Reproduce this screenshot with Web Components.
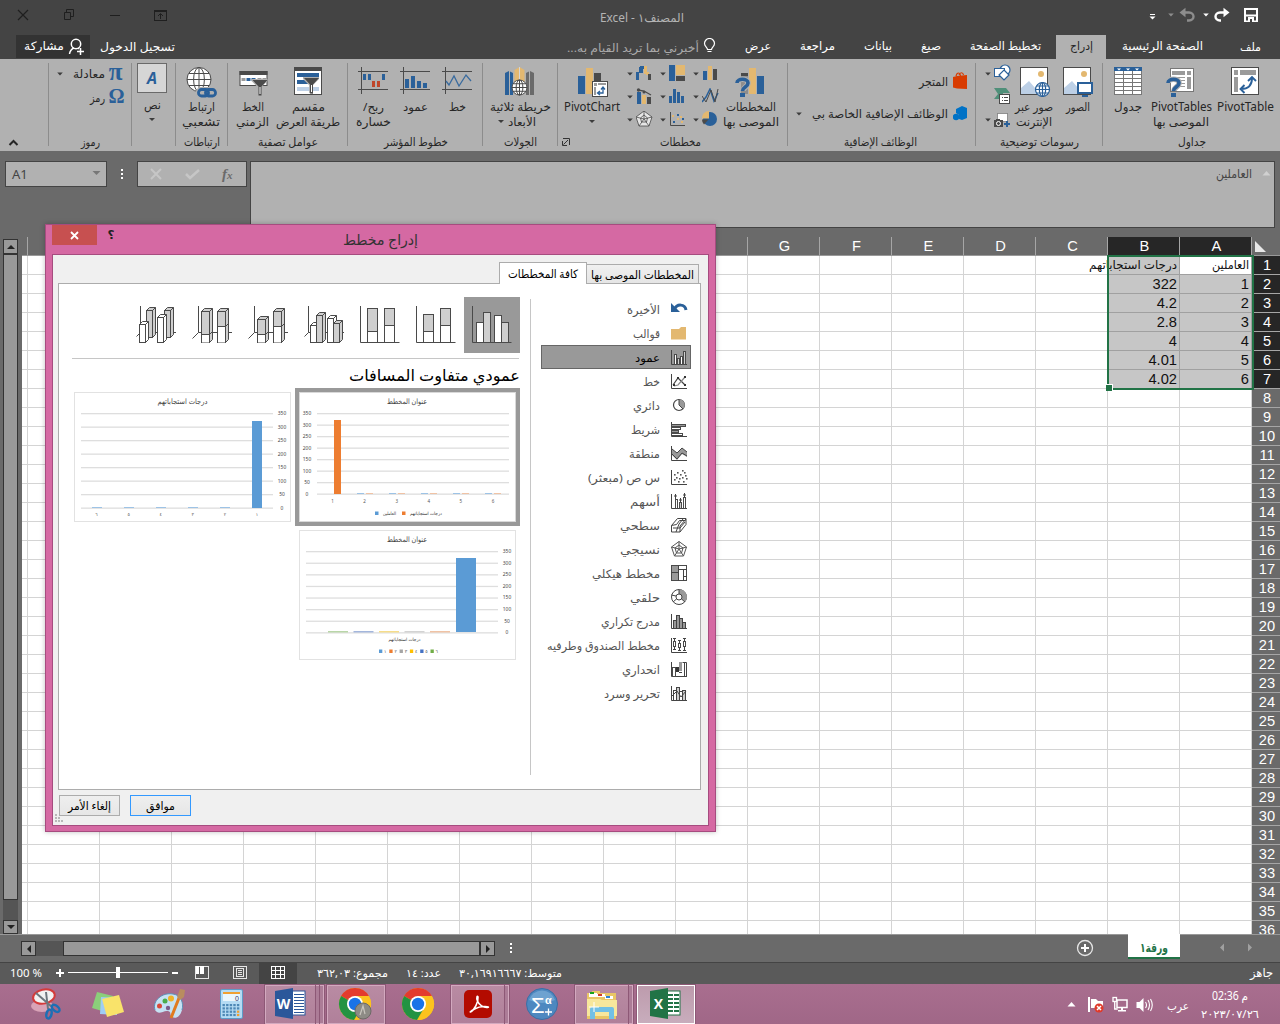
<!DOCTYPE html>
<html lang="ar">
<head>
<meta charset="utf-8">
<title>المصنف١ - Excel</title>
<style>
html,body{margin:0;padding:0}
body{width:1280px;height:1024px;overflow:hidden;background:#6a6a6a;font-family:"Noto Sans","DejaVu Sans",sans-serif}
</style>
</head>
<body>
<excel-app></excel-app>
<script>
const BLUE='#2a6099', SAND='#e3b870', DARK='#4a4a4a';

/* ---------- small markup helpers ---------- */
const svg=(x,y,w,h,c)=>`<svg width="${w}" height="${h}" viewBox="${x} ${y} ${w} ${h}" style="display:block;flex:none">${c}</svg>`;
const ic=(x,y,w,h,c)=>[x,y,w,svg(x,y,w,h,c)];
const rc=(x,y,w,h,f,s='')=>`<rect x="${x}" y="${y}" width="${w}" height="${h}" fill="${f}" ${s}/>`;
const bx=(x,y,w,h,f,s=DARK)=>`<rect x="${x+.5}" y="${y+.5}" width="${w-1}" height="${h-1}" fill="${f}" stroke="${s}"/>`;
const pa=(d,s=DARK,w=1,f='none')=>`<path d="${d}" stroke="${s}" stroke-width="${w}" fill="${f}"/>`;
const fl=(d,f)=>`<path d="${d}" fill="${f}" fill-rule="evenodd"/>`;
const ci=(x,y,r,f,s='none',w=1)=>`<circle cx="${x}" cy="${y}" r="${r}" fill="${f}" stroke="${s}" stroke-width="${w}"/>`;
const fit=(w,t,size=11.5,color='#262626',more='')=>`<fit-text w="${w}" style="font-size:${size}px;color:${color};${more}">${t}</fit-text>`;
const tx=(x1,x2,yc,t,size,color,more)=>[x1,yc-8,x2-x1,fit(x2-x1,t,size,color,more)];
const ar=(x,y,c='#3c3c3c')=>ic(x-3,y-2,6,4,fl(`M${x-2.8} ${y-1.5}h5.6l-2.8 3z`,c));
/* a horizontal flex strip: items are [x, y, width, html] */
const strip=(x0,y0,items)=>{
  let c=x0, out='';
  for(const [x,y,w,h] of items.slice().sort((a,b)=>a[0]-b[0])){
    out+=`<div style="flex:none;width:${w}px;margin-left:${x-c}px;margin-top:${y-y0}px">${h}</div>`;
    c=x+w;
  }
  return `<div style="display:flex;align-items:flex-start">${out}</div>`;
};

function define(name,css,html){
  const t=document.createElement('template');
  t.innerHTML=`<style>:host{display:block;box-sizing:border-box}*{box-sizing:border-box}${css}</style>${html}`;
  customElements.define(name,class extends HTMLElement{
    constructor(){super();this.attachShadow({mode:'open'}).append(t.content.cloneNode(true));}
  });
}
</script>
<script>
/* ---------- title bar ---------- */
define('title-bar',`:host{height:35px;background:#444;overflow:hidden}`,strip(0,0,[
  ic(17,9,13,12,pa('M18 10l10 10M28 10l-10 10','#1f1f1f',1.2)),
  ic(63,9,12,12,pa('M66.5 12.5v-3h7v7h-3M64.5 12.5h6v7h-6z','#1f1f1f')),
  ic(109,14,12,3,rc(110,15,10,1,'#1f1f1f')),
  ic(153,9,15,12,bx(154,10,13,11,'none','#1f1f1f')+rc(154,10,13,2,'#1f1f1f')+pa('M160.5 19v-5M158 16l2.5-2.5 2.5 2.5','#1f1f1f')),
  tx(600,684,18,'المصنف١ - Excel',12,'#b4b4b4'),
  ic(1149,13,7,8,rc(1150,14,5,1,'#fff')+fl('M1149.5 16.5h6l-3 3z','#fff')),
  ar(1170.5,15,'#8d8d8d'),
  ic(1179,7,17,16,pa('M1184 12.5h5c6 0 6 8 0 8h-2','#8d8d8d',2.4)+fl('M1179.5 12.5l6-4.8v9.6z','#8d8d8d')),
  ar(1205.5,15,'#fff'),
  ic(1214,7,16,16,pa('M1225 12.5h-5c-6 0-6 8 0 8h1','#fff',2.4)+fl('M1229.5 12.5l-6-4.8v9.6z','#fff')),
  ic(1244,8,15,14,fl('M1244 8h14v14h-14zM1246 10v4.5h10V10z','#fff')+rc(1246,16.5,10,4,'#444')+rc(1248,17,6,5,'#fff')+rc(1250,19,2,3,'#444'))
]));
</script>
<script>
/* ---------- ribbon tabs ---------- */
define('ribbon-tabs',`:host{height:24px;background:#444}
 .share{background:#333;height:23px;overflow:hidden}.on{background:#b1b1b1;height:24px;overflow:hidden}`,strip(0,35,[
  [16,35,74,'<div class="share">'+strip(16,35,[tx(24,64,46,'مشاركة',11.5,'#fff'),
    ic(68,38,17,17,ci(76,44,4.7,'none','#fff',1.5)+pa('M69.5 54c.5-3 2-5 4.5-6M79 49l-1-1','#fff',1.5)+pa('M77 51.5h7M80.5 48v7','#fff',1.5))])+'</div>'],
  tx(100,175,47,'تسجيل الدخول',11.5,'#fff'),
  tx(567,699,48,'أخبرني بما تريد القيام به...',11.5,'#a9a9a9'),
  ic(703,38,13,17,pa('M707.5 49.5c0-2-3-3-3-6a5 5 0 0 1 10 0c0 3-3 4-3 6z','#fff',1.2)+rc(707.5,51,4,1,'#fff')),
  tx(745,771,46,'عرض',11.5,'#fff'),tx(800,835,46,'مراجعة',11.5,'#fff'),
  tx(864,892,46,'بيانات',11.5,'#fff'),tx(921,941,46,'صيغ',11.5,'#fff'),
  tx(970,1041,46,'تخطيط الصفحة',11.5,'#fff'),
  [1056,35,50,'<div class="on">'+strip(1056,35,[tx(1070,1093,46,'إدراج',11.5)])+'</div>'],
  tx(1122,1203,46,'الصفحة الرئيسية',11.5,'#fff'),tx(1240,1261,47,'ملف',11.5,'#fff')
]));
</script>
<script>
/* ---------- ribbon ---------- */
define('ribbon-group',`:host{display:flex;flex-direction:column;flex:none;height:92px;background:linear-gradient(#8c8c8c,#8c8c8c) right 4px/1px 83px no-repeat}
 :host([last]){background:none}
 .c{height:75px;overflow:hidden}.l{height:16px;display:flex;justify-content:center}`,
 `<div class="c"><slot></slot></div><div class="l"><slot name="label"></slot></div>`);
/* big button: icon drawn in a 34px box, caption lines under it */
const big=(x,w,icon,labels)=>[x,65,w,`<div style="display:flex;flex-direction:column;align-items:center">${svg(x+w/2-17,65,34,34,icon)}${labels.map(l=>`<div style="height:15px;display:flex;align-items:center">${l}</div>`).join('')}</div>`];
const group=(x,x2,label,lw,body,cx,more='')=>`<ribbon-group style="width:${x2-x}px" ${more}>${body}<div slot="label" style="margin-left:${cx?2*cx-x-x2:0}px">${label?fit(lw,label,11.5):''}</div></ribbon-group>`;
const funnel=(x,y)=>fl(`M${x} ${y}h16v2l-6 6v9l-4-1v-8l-6-6z`,'#b1b1b1')+fl(`M${x+1} ${y+1}h15l-6 6.5v9h-3v-9z`,DARK)+rc(x+8,y+8,1,7,'#fff');
const quest=(x,y)=>pa(`M${x+2} ${y+5}c0-5 11-5 11 0c0 4-5 4-5 8`,'#b1b1b1',5.5)+pa(`M${x+2} ${y+5}c0-5 11-5 11 0c0 4-5.5 4-5.5 8`,BLUE,3.6)+rc(x+5,y+15,5,4,BLUE);
const down='<svg width="6" height="3" viewBox="0 0 6 3" style="display:block"><path d="M0 0h6l-3 3z" fill="#3c3c3c"/></svg>';
const globe=(x,y,r,c=DARK,w=1)=>ci(x,y,r,'#fff',c,w)+`<ellipse cx="${x}" cy="${y}" rx="${r*.45}" ry="${r}" fill="none" stroke="${c}" stroke-width="${w}"/>`+pa(`M${x-r} ${y}h${2*r}M${x} ${y-r}v${2*r}M${x-r*.85} ${y-r*.5}h${r*1.7}M${x-r*.85} ${y+r*.5}h${r*1.7}`,c,w);
const photo=(x,y)=>bx(x,y,28,28,'#fff')+ci(x+21,y+7,3,SAND)+fl(`M${x+1} ${y+27}v-6l8-7 7 8 3-3v8z`,'#bdd0e6');
const spark=(x,c)=>pa(`M${x} 71.5h30M${x} 89.5h30M${x+3.5} 67v27`)+c;
const link=`fill="none" stroke="${BLUE}" stroke-width="2.8"`;
</script>
<script>
const gSymbols=group(48,132,'رموز',19,strip(48,59,[
  [56,65,70,
    strip(56,65,[ar(59.5,73.5),tx(73,105,74,'معادلة'),[108,64,15,`<div style="font:bold 25px/16px 'Liberation Serif';color:${BLUE};height:19px;text-align:center">π</div>`]])+
    strip(56,83,[tx(90,105,98,'رمز'),[108,87,17,`<div style="font:bold 20px/18px 'Liberation Serif';color:${BLUE};height:19px;text-align:center">Ω</div>`]])
  ]
]));
const gText=group(132,176,'',0,strip(132,59,[
  [137,63,30,`<div style="display:flex;flex-direction:column;align-items:center"><div style="width:30px;height:30px;border:1px solid #6a6a6a;background:#d6d6d6;font:italic bold 16px/28px 'Open Sans','Liberation Sans';color:${BLUE};text-align:center">A</div><div style="margin-top:4px;height:16px">${fit(17,'نص')}</div><div style="margin-top:5px">${down}</div></div>`]
]));
const gLinks=group(176,228,'ارتباطات',36,strip(176,59,[
  big(181,40,globe(199,79.5,12)+`<rect x="196" y="87" width="22" height="11" rx="5" fill="#b1b1b1"/><rect x="198.5" y="89.5" width="10" height="6.5" rx="3" ${link}/><rect x="205.500" y="89.5" width="10" height="6.5" rx="3" ${link}/>`,[fit(27,'ارتباط'),fit(38,'تشعبي')])
]));
const gFilters=group(228,348,'عوامل تصفية',60,strip(228,59,[
  big(234,37,bx(239,71,28,15,'#fff')+rc(239,71,28,4,DARK)+rc(241,78,4,3,'#9a9a9a')+rc(246,78,4,3,BLUE)+rc(251,78,4,3,BLUE)+rc(257,78,4,3,'#9a9a9a')+rc(262,78,4,3,'#9a9a9a')+funnel(251,79),[fit(22,'الخط'),fit(33,'الزمني')]),
  big(275,66,bx(294,67,28,28,'#fff')+rc(294,67,28,4,DARK)+rc(297,73,22,4,BLUE)+rc(297,80,12,4,BLUE)+rc(297,87,22,4,'#bdd0e6')+funnel(303,77),[fit(33,'مقسم'),fit(64,'طريقة العرض')])
]));
</script>
<script>
const gSpark=group(348,483,'خطوط المؤشر',64,strip(348,59,[
  big(354,38,spark(358,rc(363,74,3,6,BLUE)+rc(368,74,3,6,BLUE)+rc(372,81,3,6,'#c0472b')+rc(377,81,3,6,'#c0472b')+rc(382,74,3,6,BLUE)),[fit(21,'ربح/'),fit(35,'خسارة')]),
  big(398,34,spark(400,rc(405,79,4,9,BLUE)+rc(411,76,4,12,BLUE)+rc(417,81,4,7,BLUE)+rc(423,83,4,5,BLUE)),[fit(25,'عمود')]),
  big(440,34,spark(442,pa('M446 81l3 4 5-9 5 10 7-11 5 6','#3a6b9e',1.3)),[fit(17,'خط')])
]));
const gTours=group(483,558,'الجولات',33,strip(483,59,[
  big(487,66,
    fl('M505 73l4-2 4 2v22h-8z',BLUE)+pa('M509.5 71v24','#b1b1b1')+fl('M514.5 70l5-3 5 3v20h-10z',SAND)+pa('M519.5 67v20','#d6d6d6')+fl('M526 73l4-2 4 2v22h-8z','#6a6a6a')+pa('M529.5 71v24','#b1b1b1')+globe(519.5,87.5,7.5),
    [fit(61,'خريطة ثلاثية'),`<div style="display:flex;align-items:center;gap:4px">${down}${fit(28,'الأبعاد')}<span style="width:3px"></span></div>`])
]));
</script>
<script>
const pivotChart=rc(578,76,7,18,BLUE)+rc(586,68,7,26,SAND)+rc(594,73,7,8,DARK)+bx(592,81,16,16,'#fff')+rc(594,83,3,3,'#9a9a9a')+rc(598,83,8,2,'#9a9a9a')+rc(594,87,2,8,'#9a9a9a')+pa('M598 93h5v-5M600 91l-2.5 2 2.5 2M601 89.5l2-2.5 2 2.5',BLUE,1.3);
const smallCharts=
  strip(626,62,[
    ar(629.5,73.5),ic(636,65,17,16,rc(636,72,3,8,BLUE)+rc(639,67,4,6,BLUE)+rc(640,66,4,3,BLUE)+rc(644,66,3,8,SAND)+rc(646,72,3,3,SAND)+rc(648,74,3,6,DARK)),
    ar(662.5,73.5),ic(669,65,17,16,rc(669,65,6,16,BLUE)+rc(676,65,9,10,SAND)+rc(676,76,9,5,DARK)),
    ar(695.5,73.5),ic(702,65,17,16,rc(703,71,4,9,BLUE)+rc(708,66,4,14,SAND)+rc(713,69,4,11,DARK))])+
  strip(626,81,[
    ar(629.5,96.5),ic(636,88,17,17,rc(637,92,4,12,BLUE)+rc(642,95,4,9,SAND)+rc(647,97,4,7,DARK)+pa('M638 90l6 1 7 4',DARK,1.3)+ci(638.5,90,1.7,DARK)+ci(644,92,1.5,DARK)),
    ar(662.5,96.5),ic(669,88,17,17,rc(669,96,3,7,BLUE)+rc(673,89,3,14,BLUE)+rc(677,92,3,11,BLUE)+rc(681,96,3,7,BLUE)),
    ar(695.5,96.5),ic(702,88,17,17,pa('M702 102l4-5 4-8 4 12 4-8',BLUE,1.5)+pa('M702 96l4 6 5-12 4 12 3-13',DARK,1))])+
  strip(626,105,[
    ar(629.5,119.5),ic(636,111,17,17,fl('M644 111l8 6-3 9h-10l-3-9z','#e6e6e6')+pa('M644 111l8 6-3 9h-10l-3-9zM644 115l3.5 3-1 4h-5l-1-4zM644 111v8l8-2M644 119l5 7M644 119l-5 7M644 119l-8-2',DARK,.8)),
    ar(662.5,119.5),ic(669,111,17,17,pa('M670.5 112v13.5H685')+rc(672,115,2,2,SAND)+rc(677,114,2,2,BLUE)+rc(682,118,2,2,BLUE)+rc(680,116,2,2,SAND)+rc(673,121,2,2,BLUE)+rc(677,118,2,2,SAND)+rc(681,121,2,2,SAND)),
    ar(695.5,119.5),ic(702,111,17,17,ci(710,119,7,BLUE)+fl('M709 118.500v-7.500a7 7 0 0 0-7 7.500z',SAND)+fl('M708.5 119.5h-6.5a7 7 0 0 0 2 5z',DARK))]);
const launcher='<svg width="8" height="8" viewBox="0 0 8 8" style="display:block"><path d="M1 .5H7.500V7M.5 3v4.500H5M6 2L1.500 6.500" stroke="#333" fill="none"/></svg>';
const gCharts=group(558,788,'مخططات',41,strip(558,59,[
  [562,65,60,`<div style="display:flex;flex-direction:column;align-items:center">${svg(575,65,34,34,pivotChart)}<div style="height:15px">${fit(56,'PivotChart',12)}</div><div style="margin-top:6px">${down}</div></div>`],
  [626,62,94,smallCharts],
  big(722,58,rc(757,76,7,18,BLUE)+rc(749,68,7,26,SAND)+rc(741,73,7,21,'#8d8d8d')+rc(741,73,7,3,DARK)+quest(735,78),[fit(50,'المخططات'),fit(56,'الموصى بها')])
]),680.5);
</script>
<script>
const gAddins=group(788,976,'الوظائف الإضافية',73,strip(788,59,[
  [795,71,174,
    strip(795,71,[tx(919,948,82,'المتجر'),ic(953,71,15,18,fl('M953 77l4-1 10-1v14l-10-.5-4-1z','#d83b01')+pa('M956 76c1-4 4-4 4.5 0M959 75c1-3 4-3 4.5 0','#d83b01',1.2))])+
    strip(795,89,[ar(798.5,113),tx(812,948,113,'الوظائف الإضافية الخاصة بي'),ic(953,105,15,15,fl('M956 108l6-3 5 2v10l-5 2-3-1v-4l-3-2z','#0072c6')+ci(956,116,3.2,'#0072c6'))])
  ]
]),880.5);
const gArt=group(976,1103,'رسومات توضيحية',79,strip(976,59,[
  [984,63,27,
    strip(984,63,[ar(987.5,73.5),ic(994,64,17,17,ci(1005,70,5,'#fff',BLUE,1.2)+bx(994,68,11,9,'#fff',BLUE)+pa('M1004 70l5 5-5 5-5-5z',BLUE,1.2,'#fff'))])+
    strip(984,81,[ic(994,88,17,17,fl('M994 88h12l4 5h-7v6h-9l4-5z','#4f8f79')+bx(999,94,11,10,'#fff')+rc(1002,97,1,1,DARK)+rc(1004,97,4,1,DARK)+rc(1002,100,1,1,DARK)+rc(1004,100,4,1,DARK))])+
    strip(984,105,[ar(987.5,119.5),ic(994,112,17,16,`<rect x="997.5" y="113.5" width="10" height="8" fill="#fff" stroke="${DARK}" stroke-dasharray="1 1"/>`+rc(994,120,9,7,DARK)+rc(996,119,4,2,DARK)+ci(998.5,123.5,2,'none','#fff')+pa('M1004 124h6M1007 121v6',BLUE,2))])
  ],
  big(1014,40,photo(1020,67)+globe(1042.5,89.5,7,BLUE,1.2),[fit(38,'صور عبر'),fit(36,'الإنترنت')]),
  big(1061,34,photo(1063,67)+`<rect x="1078" y="83" width="14" height="10" fill="#fff" stroke="${BLUE}" stroke-width="2"/>`+rc(1082,95,6,2,BLUE),[fit(24,'الصور')])
]));
const tableIcon=bx(1114,67,28,28,'#fff','#777')+rc(1114,67,28,4,BLUE)+[74,78,82,86,90].map(y=>rc(1114,y,28,1,'#777')).join('')+rc(1123,71,1,24,'#777')+rc(1132,71,1,24,'#777')+[1118,1127,1136].map(x=>fl(`M${x-1} 68.5h4l-2 2z`,'#fff')).join('');
const gTables=group(1103,1280,'جداول',28,strip(1103,59,[
  big(1112,32,tableIcon,[fit(28,'جدول')]),
  big(1150,62,bx(1170,68,24,24,'#fff','#777')+rc(1172,71,13,4,'#9a9a9a')+rc(1187,71,4,4,'#9a9a9a')+rc(1187,77,4,12,'#9a9a9a')+rc(1174,77,11,1,'#9a9a9a')+rc(1178,80,7,1,'#9a9a9a')+rc(1178,83,7,1,'#9a9a9a')+rc(1178,86,7,1,'#9a9a9a')+quest(1166,78),[fit(61,'PivotTables',12),fit(56,'الموصى بها')]),
  big(1216,58,bx(1231,67,28,28,'#fff')+rc(1234,70,4,5,'#9a9a9a')+rc(1240,70,16,5,'#9a9a9a')+rc(1234,77,4,15,'#9a9a9a')+pa('M1241 89c7 0 11-4 11-11M1244.5 85l-4 4 4 4M1248 81l4-4 4 4',BLUE,1.9),[fit(57,'PivotTable',12)])
]),0,'last');
define('ribbon-bar',`:host{display:flex;height:92px;background:#b1b1b1}
 .e{width:49px;flex:none;background:linear-gradient(#8c8c8c,#8c8c8c) right 4px/1px 83px no-repeat}ribbon-group:nth-of-type(1){margin-left:-1px}
 .la{position:absolute;left:562px;top:138px}`,
 '<div class="e">'+strip(0,59,[ic(8,137,11,9,pa('M9.5 145l4-4 4 4','#262626',2))])+'</div>'+gSymbols+gText+gLinks+gFilters+gSpark+gTours+gCharts+gAddins+gArt+gTables+'<div class="la">'+launcher+'</div>');
</script>
<script>
/* ---------- formula bar ---------- */
define('formula-bar',`:host{height:86px;background:#6a6a6a;padding-top:10px}
 .b{border:1px solid #444;background:#b1b1b1;height:26px;overflow:hidden}.f{height:67px}`,strip(0,161,[
  [5,161,102,'<div class="b">'+strip(6,162,[[12,166,20,`<div style="font:13px/16px 'Noto Sans';color:#444">A1</div>`],ic(92,170,9,5,fl('M92.5 171h8l-4 4z','#777'))])+'</div>'],
  ic(120,167,4,14,rc(121,169,2,2,'#fff')+rc(121,173,2,2,'#fff')+rc(121,177,2,2,'#fff')),
  [137,161,110,'<div class="b">'+strip(138,162,[ic(150,168,12,12,pa('M151 169l10 10M161 169l-10 10','#c6c6c6',2)),ic(185,168,15,12,pa('M186 174l4 4 9-8','#c6c6c6',2.5)),[222,165,18,`<div style="font:italic bold 15px/18px 'Liberation Serif';color:#6a6a6a">f<span style="font-size:11px">x</span></div>`]])+'</div>'],
  [250,161,1025,'<div class="b f">'+strip(251,162,[tx(1216,1252,174,'العاملين',12,'#444'),ic(1262,170,9,6,fl('M1262.5 175.5h8l-4-4.5z','#d0d0d0'))])+'</div>']
]));
</script>
<script>
/* ---------- worksheet ---------- */
const cells={1:['العاملين','درجات استجاباتهم'],2:['1','322'],3:['2','4.2'],4:['3','2.8'],5:['4','4'],6:['5','4.01'],7:['6','4.02']};
let rows='';
for(let r=1;r<=36;r++){
  let h='<i class="c" style="width:6px"></i>';
  for(let k=16;k>=0;k--){
    const s=r<8&&k<2, v=s?cells[r][k]:'';
    const t=r===1&&s?fit(k?88:37,v,12,'#111','margin-top:1px;'):v;
    const cls=(s?(r===1&&k===0?' act':' s'):'')+(r===1&&k===1?' over':'');
    h+='<div class="c'+cls+'">'+t+'</div>';
  }
  rows+='<div class="r">'+h+'<div class="n'+(r<8?' h':'')+'">'+r+'</div></div>';
}
let heads='<b style="width:6px"></b>';
for(let k=16;k>=0;k--)heads+='<b class="'+(k<2?'h':'')+'">'+(k<7?'ABCDEFG'[k]:'')+'</b>';
define('sheet-grid',`:host{display:flex;height:697px;background:#6a6a6a;overflow:hidden}
 .v{width:22px;flex:none;padding:2px 0 0 3px}.v div{width:15px;border:1px solid #333;background:#999;height:15px;display:flex;align-items:center;justify-content:center}
 .v .th{height:646px}.v .tr{height:20px;border-width:0;background:#555}
 .g{width:1258px;position:relative}
 .hd{display:flex;height:19px;border-bottom:1px solid #999}
 .hd b{width:72px;flex:none;border-right:1px solid #a6a6a6;font:14.67px/19px "Liberation Sans";color:#fff;text-align:center;height:18px;padding-left:2px}
 .hd b.h{background:#262626}
 .r{display:flex;height:19px}.c{width:72px;flex:none;height:19px;background:#fff;border-right:1px solid #d4d4d4;border-bottom:1px solid #d4d4d4;font:14.67px/19px "Liberation Sans";color:#111;padding-right:2px;display:flex;justify-content:flex-end}
 .s{background:#c6c6c6;border-color:#a0a0a0}.act{border-color:#a0a0a0}.over{position:relative;z-index:1}
 .n{width:28px;flex:none;border-bottom:1px solid #a6a6a6;font:14.67px/19px "Liberation Sans";color:#fff;text-align:center;padding-left:2px}
 .n.h{background:#262626}
 .sel{position:absolute;left:1085px;top:18px;width:147px;height:135px;border:2px solid #217346;z-index:2}
 .sel::after{content:"";position:absolute;left:-3px;bottom:-3px;width:6px;height:6px;background:#217346;border:solid #fff;border-width:1px 1px 0 0}`,
 '<div class="v"><div>'+svg(0,0,8,4,fl('M0 4h8l-4-4z','#222'))+'</div><div class="th"></div><div class="tr"></div><div style="height:14px">'+svg(0,0,8,4,fl('M0 0h8l-4 4z','#222'))+'</div></div>'+
 '<div class="g"><div class="hd">'+heads+'<div style="padding:4px 0 0 2px">'+svg(0,0,12,12,fl('M1 0v11h11z','#e8e8e8'))+'</div></div>'+rows+'<div class="sel"></div></div>');
</script>
<script>
/* ---------- sheet tabs and horizontal scroll ---------- */
define('sheet-footer',`:host{height:28px;background:#6a6a6a;border-top:1px solid #999}
 .s{height:15px;border:1px solid #333;background:#999;display:flex;align-items:center;justify-content:center}
 .tab{height:25px;background:#fff;border-bottom:2px solid #217346;margin-top:-1px;overflow:hidden}`,strip(0,935,[
  [21,941,15,'<div class="s">'+svg(0,0,4,8,fl('M4 0v8l-4-4z','#222'))+'</div>'],
  [36,941,27,'<div class="s" style="border-width:0;background:#555"></div>'],
  [63,941,417,'<div class="s"></div>'],
  [480,941,15,'<div class="s">'+svg(0,0,4,8,fl('M0 0v8l4-4z','#222'))+'</div>'],
  ic(509,941,4,14,rc(510,943,2,2,'#fff')+rc(510,947,2,2,'#fff')+rc(510,951,2,2,'#fff')),
  ic(1076,939,18,18,ci(1085,948,7.5,'none','#e6e6e6',1.3)+pa('M1081 948h8M1085 944v8','#fff',2)),
  [1128,935,52,'<div class="tab">'+strip(1128,934,[tx(1140,1168,948,'ورقة١',12.5,'#217346','font-weight:bold')])+'</div>'],
  ic(1219,943,6,9,fl('M1224 943.5v8l-4-4z','#a0a0a0')),
  ic(1247,943,6,9,fl('M1248 943.5v8l4-4z','#a0a0a0'))
]));
/* ---------- status bar ---------- */
define('status-bar',`:host{height:22px;background:#5a5a5a;border-top:1px solid #444}`,strip(0,963,[
  [10,965,34,fit(32,'<bdo dir="ltr">100 %</bdo>',11.5,'#fff')],
  ic(55,968,10,10,pa('M56 973h8M60 969v8','#fff',2)),
  ic(68,966,101,14,rc(68,972,100,1,'#fff')+rc(116,967,4,11,'#fff')),
  ic(171,971,8,4,rc(172,972,6,2,'#fff')),
  ic(195,966,15,13,bx(195,966,14,13,'none','#e6e6e6')+rc(196,966,3,8,'#fff')+rc(200,966,4,8,'#fff')),
  ic(233,966,15,13,bx(233,966,14,13,'none','#e6e6e6')+bx(236,968,8,9,'none','#e6e6e6')+pa('M238 970.5h4M238 972.5h4M238 974.5h4','#e6e6e6')),
  [259,963,38,'<div style="background:#444;height:21px;display:flex;justify-content:center;padding-top:3px">'+svg(0,0,14,14,bx(0,0,14,13,'none','#fff')+pa('M4.5 0v13M9.5 0v13M0 4.5h14M0 8.5h14','#fff'))+'</div>'],
  tx(317,388,973,'مجموع: ٣٦٢,٠٣',11,'#fff'),tx(406,441,973,'عدد: ١٤',11,'#fff'),tx(459,562,973,'متوسط: ٣٠,١٦٩١٦٦٦٧',11,'#fff'),
  tx(1250,1273,973,'جاهز',11.5,'#fff')
]));
</script>
<script>
/* ---------- taskbar ---------- */
const chrome=(x,y)=>ci(x,y,16,'#fbc116')+fl(`M${x} ${y}L${x-13.9} ${y-8}A16 16 0 0 1 ${x+13.9} ${y-8}z`,'#e33b2e')+fl(`M${x-13.9} ${y-8}A16 16 0 0 0 ${x-1} ${y+16}L${x+6} ${y+4}L${x} ${y}z`,'#229342')+fl(`M${x} ${y-8}L${x+13.9} ${y-8}A16 16 0 0 1 ${x} ${y+16}L${x+7} ${y+4}z`,'#fcc31e')+ci(x,y,8,'#fff')+ci(x,y,6.2,'#1a73e8');
const office=(x,c,l,inner)=>rc(x+14,991,16,24,'#fff','stroke="'+c+'"')+inner+fl(`M${x} 991l18-3v31l-18-3z`,c)+`<text x="${x+8.5}" y="1009" text-anchor="middle" font-family="Open Sans" font-weight="700" font-size="14" fill="#fff">${l}</text>`;
const tb=(x,w,inner,cls='')=>[x,985,w,'<div class="tb '+cls+'">'+inner+'</div>'];
const edge=x=>[x,985,4,'<div class="tb e"></div>'];
const wordIcon=svg(275,986,32,36,office(275,'#2b579a','W',[994,997,1000,1003,1006,1009,1012].map(y=>rc(294,y,10,1,'#2b579a')).join('')));
const excelIcon=svg(650,986,32,36,office(650,'#217346','X',[994,998,1002,1006,1010].map(y=>rc(668,y,5,2,'#217346')+rc(674,y,5,2,'#217346')).join('')));
let keys='';
for(let i=0;i<5;i++)for(let j=0;j<4;j++)keys+=rc(222.5+i*3.6,1004+j*3.3,2.4,2.2,i===4&&j>1?'#f0a030':'#4d88b5');
const snip='<ellipse cx="42" cy="1006" rx="11" ry="6" fill="#d9a3b7"/><ellipse cx="44" cy="996.5" rx="11" ry="7" fill="#f2f2f2" stroke="#d43b3b" stroke-width="2" transform="rotate(-12 44 997)"/>'+pa('M36 993l16 14M46 992l2 17','#6d767d',2)+'<ellipse cx="56" cy="1008.5" rx="4.500" ry="2.600" fill="none" stroke="#1c6fb5" stroke-width="2.500" transform="rotate(40 56 1008)"/><ellipse cx="49" cy="1014" rx="2.500" ry="4.500" fill="none" stroke="#1c6fb5" stroke-width="2.500" transform="rotate(15 49 1014)"/>';
const notes=fl('M97 992l16 4-4 17-17-5z','#8bcf7a')+fl('M101 997l17 1-1 17-17-1z','#9fcdf5')+fl('M102 999l17-4 5 17-17 5z','#f9e36a');
const paint=fl('M155 1010c-3-9 7-18 18-16 8 1 11 9 9 16-2 7-6 9-10 7-3-2 0-5-4-6-5-1-9 5-13-1z','#c5e2f4')+pa('M155 1010c-3-9 7-18 18-16 8 1 11 9 9 16','#5d8fb5')+ci(159.5,1006,2.5,'#d84a3a')+ci(165,1001,2.5,'#4bac4b')+ci(171,998.5,3,'#f0b429')+ci(168,1008,2.2,'#7b5c8a')+pa('M171 1018l8-20','#e07b20',3)+fl('M177 997l3-8 5 1-1 7-4 3z','#b98d5f');
const folder=fl('M586 993h5v-2h8v2h16v26h-29z','#e9c665')+rc(588,993,8,4,'#fff')+rc(589,992,4,2,'#19a319')+rc(596,994,8,3,'#fff')+rc(597,994,4,2,'#d13b2a')+rc(604,996,8,3,'#fff')+rc(605,996,4,2,'#2b82d4')+fl('M586 999h13l2 1h15v16h-30z','#f8e79c')+fl('M589 1019v-10q0-2 2-2h20q2 0 2 2v10h-5v-7h-14v7z','#72c0e5')+pa('M593 1002v10M588 1007h10','#fff',1);
define('task-bar',`:host{height:40px;background:linear-gradient(#a96e8f,#a06787)}
 .tb{height:39px;border:1px solid #d3a9bf;background:linear-gradient(#b98ba3,#b0809a);outline:1px solid #8d5876;display:flex;justify-content:center;overflow:hidden}
 .e{border-width:1px 1px 1px 0;background:#ac7c97}.on{border:1px solid #fff;background:linear-gradient(#bd9bad,#c8adbc)}`,strip(0,984,[
  ic(28,986,36,36,snip),
  ic(90,986,36,34,notes),
  ic(152,986,36,36,paint),
  ic(219,988,26,32,'<rect x="220.5" y="989.5" width="22" height="29" rx="1.5" fill="#b4dbf3" stroke="#5e9cc8"/>'+rc(223,992,17,9,'#eaf6fc')+rc(223,992,17,2,'#f0a030')+'<text x="235" y="1000.5" font-family="Liberation Sans" font-size="7" fill="#336">0</text>'+keys),
  tb(265,51,wordIcon),edge(316),edge(320),
  tb(327,58,svg(339,986,36,36,chrome(356,1004)+ci(364,1011,8,'#8d8b85','#6c6a66')+pa('M361 1015l3-9 2 8','#c9c6bd',1.2))),
  ic(401,987,34,34,chrome(418,1004)),
  tb(451,54,svg(462,986,30,34,'<rect x="463" y="990" width="28" height="28" rx="5" fill="#b30b00"/>'+pa('M469.5 1012c4-2 8-10 7.500-15-.5-2-2 0-.5 4s6 7 10 6.500-6-2.500-13 1.500c-2.500 1.500-5 3-4 3z','#fff',1.6))),
  edge(505),
  ic(525,987,34,34,ci(542,1004,15.5,'#4d88c0','#3b6fa5')+fl('M529 1000a13.5 13 0 0 1 26 0q-13 6-26 0z','#6ea2d0')+'<text x="531" y="1013" font-family="Liberation Sans" font-size="22" fill="#fff">Σ</text><text x="545" y="1004" font-family="Liberation Sans" font-weight="700" font-size="11" fill="#fff">α</text>'+pa('M545 1012h7M548.5 1008.5v7','#fff',1.3)),
  tb(575,54,svg(584,986,34,36,folder)),edge(629),
  tb(637,58,excelIcon,'on'),
  ic(1067,1002,9,5,fl('M1067.5 1006.5h8l-4-4.5z','#fff')),
  ic(1087,996,18,18,rc(1088,997,2,15,'#fff')+fl('M1091 999h5l2 2h5v8h-5l-2-1h-5z','#fff')+ci(1099,1008,4.5,'#e03a2b')+pa('M1097 1006l4 4M1101 1006l-4 4','#fff',1.5)),
  ic(1112,996,17,17,'<rect x="1117" y="1000" width="10" height="7.5" fill="none" stroke="#fff" stroke-width="1.5"/>'+rc(1118,1010,8,1.5,'#fff')+rc(1121,1007,2,3,'#fff')+'<rect x="1113" y="997.5" width="3.5" height="4" fill="none" stroke="#fff" stroke-width="1.3"/>'+pa('M1114.7 1002v7h3','#fff',1.3)),
  ic(1136,996,17,18,fl('M1136.5 1002h3l4-4v14l-4-4h-3z','#fff')+pa('M1145.5 1002q2 3 0 6M1148 1000q3 5 0 10M1150.5 999q3.5 6 0 12','#fff',1.1)),
  tx(1167,1189,1006,'عرب',11.5,'#fff'),
  [1200,988,60,'<div style="display:flex;flex-direction:column;align-items:center">'+fit(36,'م 02:36',12,'#fff')+'<div style="height:2px"></div>'+fit(58,'٢٠٢٣/٠٧/٢٦',11,'#fff')+'</div>']
]));
</script>
<script>
/* ---------- previews in the dialog ---------- */
const st=(x,y,t,s=4.5,c='#555',len=0)=>'<text x="'+x+'" y="'+y+'" font-size="'+s+'" fill="'+c+'" text-anchor="middle" font-family="Noto Sans,DejaVu Sans,sans-serif"'+(len?' textLength="'+len+'" lengthAdjust="spacingAndGlyphs"':'')+'>'+t+'</text>';
const axis=(x,w,y,step,lx)=>[350,300,250,200,150,100,50,0].map((v,i)=>rc(x,y+i*step,w,1.3,'#dedede')+st(lx,y+i*step+2,v,4.5,'#444',String(v).length*2.8)).join('');
let s1='',s2='',s3='';
for(let i=0;i<5;i++){
  s1+=rc(357+i*32,493,7,1,'#9dc3e6')+rc(366+i*32,493,7,1,'#f0c3a5');
  s2+=rc(92+i*32,507,10,1,'#9dc3e6');
  s3+=rc(328+i*25.5,631,20,1.5,['#b9d6a8','#a3b6dc','#f6dd8b','#d3d3d3','#f0c3a5'][i]);
}
for(let i=0;i<6;i++){
  s1+=st(332.5+i*32.1,503,i+1);
  s2+=st(96.5+i*32.1,516,'٦٥٤٣٢١'[i]);
  s3+=rc(379+i*10.3,649.5,3.3,3.5,['#5b9bd5','#ed7d31','#a5a5a5','#ffc000','#4472c4','#70ad47'][i])+st(385.3+i*10.3,653,'١٢٣٤٥٦'[i]);
}
const c1=svg(299,392,217,130,bx(299,392,217,130,'#fff','#d9d9d9')+st(407,404,'عنوان المخطط',7.5,'#444',40)+axis(317,192,413,11.5,307)+rc(334,420,7,74,'#ed7d31')+s1+rc(375,511.5,3.5,3.5,'#5b9bd5')+st(389.5,514.5,'العاملين',4.5,'#333',13)+rc(402,511.5,3.5,3.5,'#ed7d31')+st(426,514.5,'درجات استجاباتهم',4.5,'#333',32));
const c2=svg(74,392,217,130,bx(74,392,217,130,'#fff','#e2e2e2')+st(182.5,404,'درجات استجاباتهم',7.5,'#444',50)+axis(81,192,413,13.5,282)+rc(252,421,10,87,'#5b9bd5')+s2);
const c3=svg(299,530,217,130,bx(299,530,217,130,'#fff','#e2e2e2')+st(407,542,'عنوان المخطط',7.5,'#444',40)+axis(306,192,551,11.6,507)+rc(456,558,20,74,'#5b9bd5')+st(404.5,641,'درجات استجاباتهم',4.5,'#333',32)+s3);
</script>
<script>
const G='#cfcfcf',W='#fff';
const b3=(x,y,w,h,f,d=4)=>pa(`M${x} ${y}l${d-1}-${d-1}h${w}v${h}l-${d-1} ${d-1}`,DARK,1,f)+pa(`M${x+w} ${y}l${d-1}-${d-1}`)+`<rect x="${x}" y="${y}" width="${w}" height="${h}" fill="${f}" stroke="${DARK}"/>`;
const floor=(x,d)=>pa(`M${x} 9v26.5M${x} 35.500l-${d} ${d}M${x} 35.500H40`);
const split=(x,y)=>rc(x+.5,y+.5,7,45-y,W)+pa(`M${x} ${y}h8l3-3`);
const kinds=[
 floor(4.5,4)+b3(10.5,13.5,6,27,G)+b3(3.5,27.5,6,18,W)+b3(28.5,13.5,6,27,G)+b3(21.5,20.5,6,25,W),
 floor(6.5,6)+b3(9.5,14.5,8,31,G)+split(9.5,37.5)+b3(25.5,14.5,8,31,G)+split(25.5,29.5),
 floor(6.5,6)+b3(9.5,22.5,8,23,G)+split(9.5,37.5)+b3(25.5,14.5,8,31,G)+split(25.5,29.5),
 floor(4.5,4)+b3(6.5,28.5,6,17,W)+b3(12.5,18.5,6,27,G)+b3(23.5,21.5,6,24,W)+b3(29.5,26.5,6,19,G),
 pa('M.5 9v36.5h39')+bx(7,11,11,35,G)+bx(7,34,11,12,W)+bx(24,11,11,35,G)+bx(24,28,11,18,W),
 pa('M.5 9v36.5h39')+bx(7,17,11,29,G)+bx(7,34,11,12,W)+bx(24,11,11,35,G)+bx(24,28,11,18,W),
 pa('M.5 9v36.5h39')+bx(4,25,8,21,W)+bx(11,15,8,31,G)+bx(22,18,8,28,W)+bx(29,25,8,21,G)
];
const L=pa('M.5 1v14.5H16','#444');
const scatter=[[3,5],[6,3],[11,1],[9,5],[13,3],[3,10],[5,8],[8,9],[11,8],[14,6],[7,12],[12,12],[15,9]].map(p=>rc(p[0],p[1],1.6,1.6,'#555')).join('');
const list=[
 ['الأخيرة',33,pa('M3 9c3-7 11-6 12 0',BLUE,3)+fl('M0 2v9h9z',BLUE)],
 ['قوالب',27,fl('M0 4h8l2-2h5v12.5H0z',SAND)],
 ['عمود',25,L+bx(3,5,3,11,W)+bx(6,9,3,7,G)+bx(9,7,3,9,W)+bx(12,2,3,14,G)],
 ['خط',17,L+pa('M2 12l5-7 7 7','#444',1.2)+pa('M3 13l4-1 7-8','#888',1.2)+rc(6,4,2,2,'#333')+rc(13,3,2,2,'#333')+rc(2,11,2,2,'#333')+rc(13,11,2,2,'#333')],
 ['دائري',27,ci(8,8,5.5,W,'#444',1.2)+fl('M8 8V2.5a5.5 5.5 0 0 1 4 9.5z','#999')+pa('M8 2v6l4 4','#444')],
 ['شريط',29,L+bx(0,3,15,3,'#999')+bx(0,6,10,3,W)+bx(0,9,8,3,'#999')+bx(0,12,12,3,W)],
 ['منطقة',31,fl('M1 4l5 4 5-5 5 4v5l-5-3-5 6-5-5z','#999')+pa('M1 4l5 4 5-5 5 4M1 9l5 5 5-6 5 3','#444')+L],
 ['س ص (مبعثر)',72,L+scatter],
 ['أسهم',30,L+bx(4,6,3,10,W)+bx(8,9,3,7,G)+bx(12,4,3,12,W)+pa('M4.5 1v5M9.5 5v4M13.5 0v4M3 3h3M8 7h3M12 2h3','#444')],
 ['سطحي',40,pa('M.5 8.5l6-7h8.5v6l-6 7.5H.5zM.5 8.5l5-1 3-4h6M2 11h7l5-6M5 15l3-8 4-5M9 15V9l6-7','#444')],
 ['نسيجي',40,pa('M8 .5l7.5 5.5-3 9h-9l-3-9zM8 4l4 3-1.5 5h-5L4 7zM8 .5V8L15.5 6M8 8l4.5 7M8 8l-4.5 7M8 8L.5 6','#555')],
 ['مخطط هيكلي',68,bx(0,0,16,16,W)+rc(1,1,6,14,'#999')+pa('M7.5 0v16M0 7.5h7M7 4.5h9M12.5 4v12M12 11.5h4','#444')],
 ['حلقي',30,ci(8,8,7.5,W,'#444')+fl('M8 8V.5A7.5 7.5 0 0 1 14 13z','#999')+ci(8,8,3,W,'#444')+pa('M8 .5v4.5M14 13l-3.5-3M2 13l3.5-3M.5 6l4.5 1','#444')],
 ['مدرج تكراري',59,bx(2,7,4,9,'#999','#444')+bx(5,2,4,14,'#999','#444')+bx(8,5,4,11,'#999','#444')+bx(11,9,4,7,'#999','#444')+L],
 ['مخطط الصندوق وطرفيه',113,L+pa('M3.5 1v11M8.5 3v11M13.5 1v12M2 1.5h3M7 3.5h3M12 1.5h3M2 12.5h3M7 13.5h3M12 13.5h3','#444')+bx(2,4,3,6,W)+bx(7,6,3,5,W)+bx(12,4,3,6,W)],
 ['انحداري',38,L+bx(1,6,4,10,W)+rc(5,6,3,5,'#333')+rc(8,1,3,9,'#999')+pa('M8 11.5h3M11.5 1.5h4v14M13.5 2v13','#444')],
 ['تحرير وسرد',56,bx(2,5,4,11,W,'#444')+bx(5,2,4,14,G,'#444')+bx(8,6,4,10,W,'#444')+bx(11,5,4,11,G,'#444')+pa('M1 11l5-5 4 6 5-6','#444')+L]
];
let kindHtml='',listHtml='';
kinds.forEach((k,i)=>{kindHtml+='<div class="'+(i===6?'on':'')+'"><svg width="56" height="56" viewBox="-8 0 56 56">'+k+'</svg></div>'});
list.forEach((l,i)=>{listHtml+='<chart-kind '+(i===2?'on':'')+'>'+fit(l[1],l[0],11.5,i===2?'#000':'#555','margin-top:1px')+'<svg slot="icon" style="display:block" width="17" height="17" viewBox="0 0 17 17">'+l[2]+'</svg></chart-kind>'});
const grip=svg(0,0,9,9,[[0,0],[0,3],[3,3],[0,6],[3,6],[6,6]].map(p=>rc(p[0],p[1],2,2,'#b8b8b8')).join(''));
</script>
<script>
define('chart-kind',`:host{width:150px;height:24px;display:flex;align-items:center;justify-content:flex-end;padding-right:2px;border:1px solid transparent}
 :host([on]){background:#999;border-color:#666}.i{margin-left:11px}`,`<slot></slot><span class="i"><slot name="icon"></slot></span>`);
define('chart-dialog',`:host{position:absolute;left:45px;top:224px;width:671px;height:608px;background:#d569a3;border:1px solid #a64c7f;z-index:5;box-shadow:0 0 5px rgba(0,0,0,.25)}
 .t{height:29px}.x{background:#c75050;height:20px;display:flex;align-items:center;justify-content:center}
 .in{margin-left:6px;width:657px;height:572px;background:#f0f0f0;border:1px solid #a64c7f;padding:7px 0 0 5px}
 .tabs{display:flex;align-items:flex-end;height:21px;padding-left:441px}
 .a{width:88px;height:22px;background:#fff;border:1px solid #acacac;border-bottom:0;position:relative;z-index:1;margin-bottom:-1px;display:flex;justify-content:center;padding-top:3px}
 .b{width:112px;height:19px;border:1px solid #acacac;border-left:0;border-bottom:0;background:linear-gradient(#f0f0f0,#e5e5e5);display:flex;justify-content:center;padding-top:2px}
 .p{width:643px;height:507px;background:#fff;border:1px solid #acacac;display:flex}
 .m{width:471px;flex:none;padding:13px 0 0 13px}.k{display:flex;width:448px;padding-left:56px}.k div{width:56px;height:56px;flex:none}.k .on{background:#999}
 .hr{height:1px;width:447px;background:#c6c6c6;margin:5px 0 8px}.ti{width:448px;display:flex;justify-content:flex-end}
 .ch{display:flex;margin-top:5px;align-items:flex-start}.sel{border:4px solid #999}
 .d{width:1px;height:476px;background:#c6c6c6;margin-top:15px;flex:none}
 .ls{margin:13px 0 0 10px}
 .bt{display:flex;gap:10px;padding:5px 0 0 1px;align-items:flex-start}
 .bt div{width:61px;height:21px;border:1px solid #acacac;background:linear-gradient(#efefef,#e6e6e6);display:flex;justify-content:center;padding-top:2px}
 .bt div.ok{border-color:#39f}
 .gr{margin:-2px 0 0 -3px}`,
 '<div class="t">'+strip(46,225,[[52,225,45,'<div class="x">'+svg(0,0,9,9,pa('M1 1l7 7M8 1l-7 7','#fff',1.8))+'</div>'],
   [105,227,12,`<div style="font:bold 12px/16px 'DejaVu Sans';color:#222;text-align:center">؟</div>`],tx(343,418,239,'إدراج مخطط',15,'#333')])+'</div>'+
 '<div class="in"><div class="tabs"><div class="a">'+fit(70,'كافة المخططات',11.5,'#000')+'</div><div class="b">'+fit(103,'المخططات الموصى بها',11.5,'#000')+'</div></div>'+
 '<div class="p"><div class="m"><div class="k">'+kindHtml+'</div><div class="hr"></div><div class="ti">'+fit(171,'عمودي متفاوت المسافات',16,'#000')+'</div>'+
 '<div class="ch"><div style="margin:4px 4px 0 2px">'+c2+'</div><div><div class="sel">'+c1+'</div><div style="margin:4px 0 0 4px">'+c3+'</div></div></div></div>'+
 '<div class="d"></div><div class="ls">'+listHtml+'</div></div>'+
 '<div class="bt"><div>'+fit(43,'إلغاء الأمر',11.5,'#000')+'</div><div class="ok">'+fit(29,'موافق',11.5,'#000')+'</div></div><div class="gr">'+grip+'</div></div>');

define('excel-app',`:host{width:1280px;height:1024px;position:relative;overflow:hidden}`,
 `<title-bar></title-bar><ribbon-tabs></ribbon-tabs><ribbon-bar></ribbon-bar><formula-bar></formula-bar><sheet-grid></sheet-grid><sheet-footer></sheet-footer><status-bar></status-bar><task-bar></task-bar><chart-dialog></chart-dialog>`);

/* single line of text set to an exact width */
customElements.define('fit-text',class extends HTMLElement{
  constructor(){super();this.attachShadow({mode:'open'}).innerHTML=`<style>:host{display:block;flex:none;height:16px;line-height:16px;white-space:nowrap;font-family:"Noto Sans","DejaVu Sans",sans-serif}
   div{direction:ltr;height:16px}span{display:inline-block;direction:rtl;unicode-bidi:isolate;transform-origin:0 50%;line-height:16px;height:16px;vertical-align:top}</style><div><span><slot></slot></span></div>`;}
  connectedCallback(){
    const w=+this.getAttribute('w'),s=this.shadowRoot.querySelector('span');
    this.style.width=w+'px';
    const n=s.getBoundingClientRect().width;
    if(n)s.style.transform=`scaleX(${w/n})`;
  }
});
</script>
</body>
</html>
